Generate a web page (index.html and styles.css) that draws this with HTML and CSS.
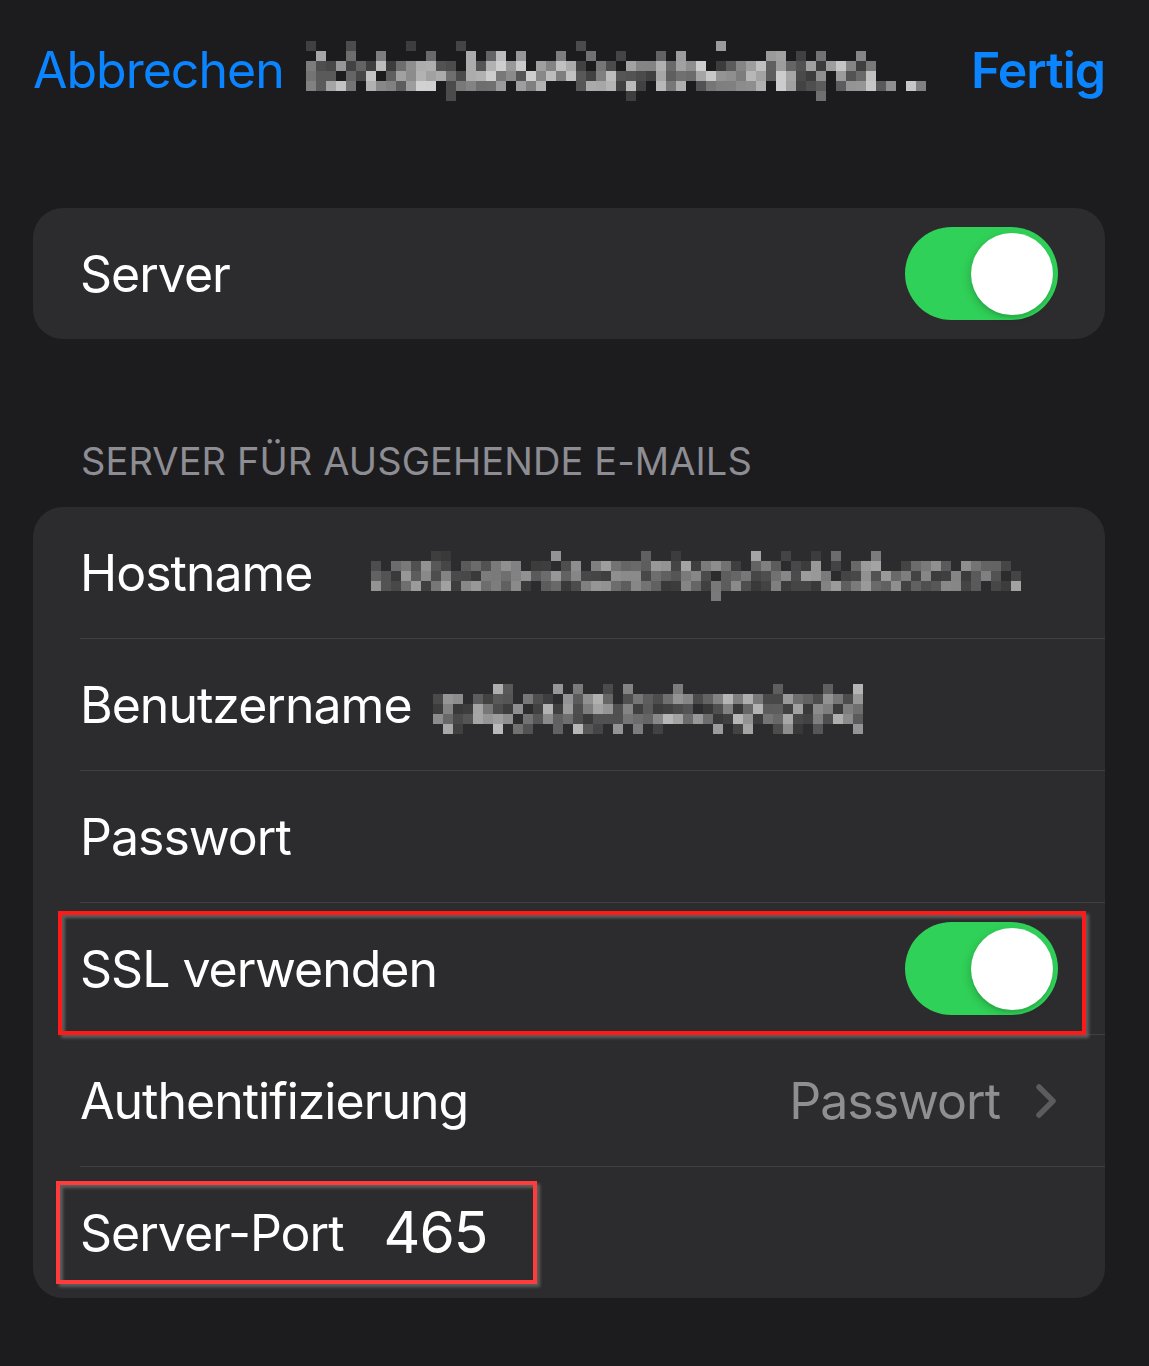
FILE: index.html
```html
<!DOCTYPE html>
<html lang="de">
<head>
  <meta charset="UTF-8" />
  <title>Server für ausgehende E-Mails</title>
  <link rel="stylesheet" href="styles.css">
</head>
<body>
  <header class="nav">
    <a class="nav-btn">Abbrechen</a>
    <div class="nav-title">
      <svg class="mosaic" data-cols="62" data-rows="6" data-seed="7" data-min="60" data-max="210" data-probs="0.06,0.45,0.95,0.95,0.85,0.06" data-tail="5"></svg>
    </div>
    <a class="nav-btn done">Fertig</a>
  </header>

  <section class="group">
    <div class="cell">
      <div class="cell-body">
        <span class="label">Server</span>
        <span class="switch on"><span class="knob"></span></span>
      </div>
    </div>
  </section>

  <h2 class="group-title">Server für ausgehende E-Mails</h2>
  <section class="group">
    <div class="cell">
      <div class="cell-body">
        <span class="label">Hostname</span>
        <svg class="mosaic host" data-cols="65" data-rows="5" data-seed="21" data-min="56" data-max="165" data-probs="0.2,0.75,0.95,0.95,0.04"></svg>
      </div>
    </div>
    <div class="cell">
      <div class="cell-body">
        <span class="label">Benutzername</span>
        <svg class="mosaic user" data-cols="43" data-rows="5" data-seed="5" data-min="56" data-max="185" data-probs="0.25,0.9,0.95,0.95,0.35"></svg>
      </div>
    </div>
    <div class="cell">
      <div class="cell-body">
        <span class="label">Passwort</span>
      </div>
    </div>
    <div class="cell">
      <div class="cell-body">
        <span class="label">SSL verwenden</span>
        <span class="switch on"><span class="knob"></span></span>
        <span class="mark mark-ssl"></span>
      </div>
    </div>
    <div class="cell">
      <div class="cell-body">
        <span class="label">Authentifizierung</span>
        <span class="detail">Passwort</span>
        <svg class="chevron" width="22" height="36" viewBox="0 0 22 36">
          <polyline points="4,4 18,18 4,32" fill="none" stroke="#5b5b60" stroke-width="5.5" stroke-linecap="round" stroke-linejoin="round"/>
        </svg>
      </div>
    </div>
    <div class="cell">
      <div class="cell-body">
        <span class="label">Server-Port</span>
        <span class="port">465</span>
        <span class="mark mark-port"></span>
      </div>
    </div>
  </section>

  <script>
    // pixelated placeholders for the blurred values
    function rng(seed) {
      return function () {
        seed |= 0; seed = seed + 0x6D2B79F5 | 0;
        let t = Math.imul(seed ^ seed >>> 15, 1 | seed);
        t = t + Math.imul(t ^ t >>> 7, 61 | t) ^ t;
        return ((t ^ t >>> 14) >>> 0) / 4294967296;
      };
    }

    document.querySelectorAll(".mosaic").forEach(svg => {
      const cols = +svg.dataset.cols;
      const rows = +svg.dataset.rows;
      const min = +svg.dataset.min;
      const max = +svg.dataset.max;
      const tail = +(svg.dataset.tail || 0);
      const probs = svg.dataset.probs.split(",").map(Number);
      const rand = rng(+svg.dataset.seed);
      const size = 10;
      svg.setAttribute("width", cols * size);
      svg.setAttribute("height", rows * size);
      let out = "";
      for (let c = 0; c < cols; c++) {
        const inTail = c >= cols - tail;
        for (let r = 0; r < rows; r++) {
          let p = probs[r];
          if (inTail) p = r === rows - 2 ? 0.9 : (r === rows - 3 ? 0.3 : 0);
          if (rand() > p) continue;
          const g = Math.round(min + Math.pow(rand(), 1.3) * (max - min));
          out += `<rect x="${c * size}" y="${r * size}" width="${size}" height="${size}" fill="rgb(${g},${g},${g})"/>`;
        }
      }
      svg.innerHTML = out;
    });
  </script>
</body>
</html>
```

FILE: styles.css
```css
body {
  margin: 0;
  padding: 0 44px 60px 33px;
  background-color: #1c1c1e;
  color: #fff;
  font-family: Inter, "Noto Sans", sans-serif;
  font-size: 50px;
  letter-spacing: -1px;
}
.nav {
  display: flex;
  align-items: center;
  height: 140px;
}
.nav-btn {
  color: #0a84ff;
}
.nav-btn.done {
  font-weight: 600;
  margin-left: auto;
}
.nav-title {
  display: flex;
  margin-left: 22px;
  padding-top: 2px;
}
.mosaic {
  display: block;
}
.group {
  background-color: #2c2c2e;
  border-radius: 30px;
  overflow: hidden;
  margin-top: 68px;
}
.cell {
  padding-left: 47px;
}
.cell-body {
  position: relative;
  display: flex;
  align-items: center;
  height: 131px;
  padding: 0 47px 0 0;
  border-bottom: 1px solid #3f3f43;
}
.cell:last-child .cell-body {
  border-bottom: none;
}
.label {
  white-space: nowrap;
}
.group-title {
  margin: 99px 0 0 48px;
  font-size: 38px;
  font-weight: 400;
  letter-spacing: 0.1px;
  line-height: 46px;
  text-transform: uppercase;
  color: #8d8d93;
}
.group-title + .group {
  margin-top: 23px;
}
.switch {
  margin-left: auto;
  width: 153px;
  height: 93px;
  border-radius: 47px;
  background-color: #30d158;
  display: flex;
  align-items: center;
  justify-content: flex-end;
  padding: 0 5px;
  box-sizing: border-box;
}
.knob {
  width: 82px;
  height: 82px;
  border-radius: 50%;
  background-color: #fff;
  box-shadow: -2px 3px 9px rgba(0, 0, 0, 0.16), 0 3px 1px rgba(0, 0, 0, 0.05);
}
.mosaic.host {
  margin-left: 59px;
  margin-top: 6px;
}
.mosaic.user {
  margin-left: 21px;
  margin-top: 8px;
}
.detail {
  margin-left: auto;
  color: #8e8e93;
}
.chevron {
  margin-left: 35px;
  margin-right: 1px;
}
.port {
  margin-left: 40px;
  font-size: 57px;
  letter-spacing: -1px;
}
.mark {
  position: absolute;
  box-sizing: border-box;
  border: 4px solid #ff1a1a;
  box-shadow: 3px 3px 3px rgba(110, 110, 110, 0.75), inset 3px 3px 3px rgba(110, 110, 110, 0.75);
}
.mark-ssl {
  left: -22px;
  top: 8px;
  width: 1028px;
  height: 124px;
}
.mark-port {
  left: -24px;
  top: 14px;
  width: 481px;
  height: 103px;
  border-color: #ff3b3b;
}
```
